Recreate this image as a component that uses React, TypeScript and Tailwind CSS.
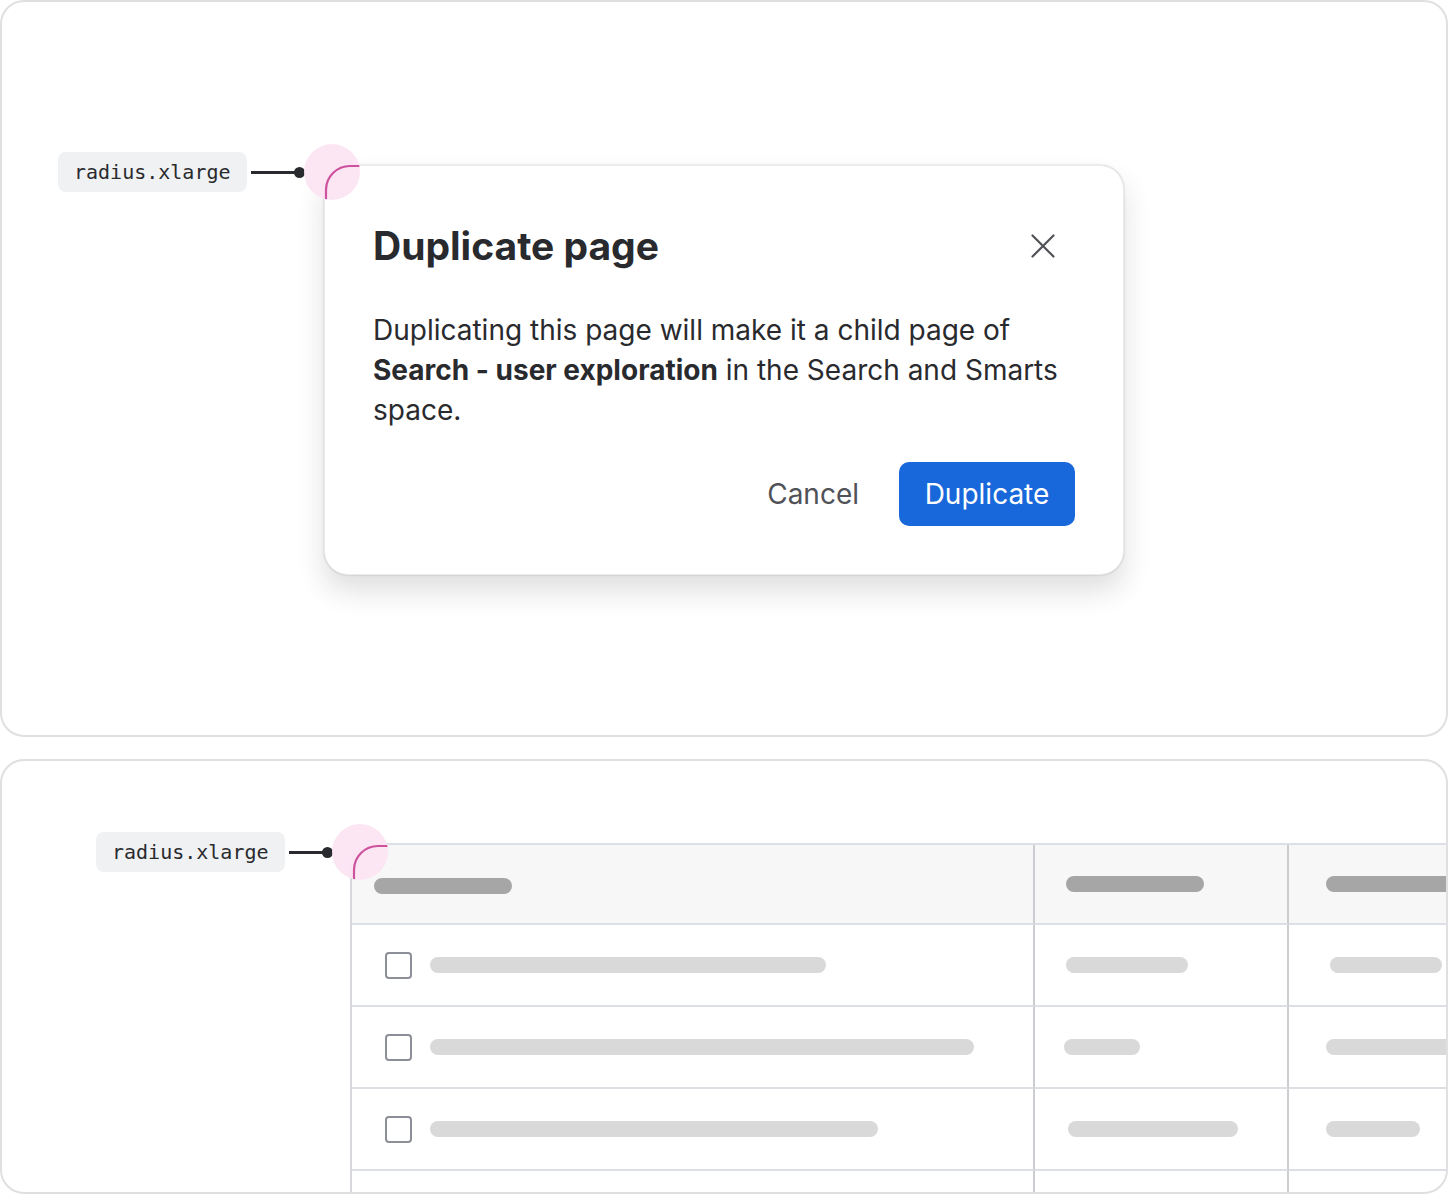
import { useId } from "react";

const mono = { fontFamily: '"DejaVu Sans Mono", "Liberation Mono", monospace' };

// chip + leader line + pink corner marker
function RadiusTag({ className, lineW }: { className: string; lineW: string }) {
  const clip = useId();
  return (
    <div className={`absolute flex items-center ${className}`}>
      <span
        className="flex h-10 items-center rounded-lg bg-[#f0f1f2] px-4 text-[20px] text-[#292a2e]"
        style={mono}
      >
        radius.xlarge
      </span>
      <span className={`ml-1 h-[3px] bg-[#292a2e] ${lineW}`} />
      <span className="-ml-[3px] h-[11px] w-[11px] rounded-full bg-[#292a2e]" />
      <svg width="56" height="56" viewBox="0 0 56 56" className="-ml-px">
        <defs>
          <clipPath id={clip}>
            <circle cx="28" cy="28" r="28" />
          </clipPath>
        </defs>
        <circle cx="28" cy="28" r="28" fill="#fce5f3" fillOpacity="0.95" />
        <path
          d="M22 60 V46 A24 24 0 0 1 46 22 H60"
          fill="none"
          stroke="#cd519d"
          strokeWidth="2.2"
          clipPath={`url(#${clip})`}
        />
      </svg>
    </div>
  );
}

function Bar({ w, dark, className = "" }: { w: string; dark?: boolean; className?: string }) {
  return (
    <span
      className={`block h-4 shrink-0 rounded-full ${dark ? "bg-[#a6a6a6]" : "bg-[#d9d9d9]"} ${w} ${className}`}
    />
  );
}

function Checkbox() {
  return <span className="block h-[27px] w-[27px] shrink-0 rounded-[4px] border-2 border-[#8c8f97]" />;
}

const cell = "flex items-center border-b-2 border-r-2 border-b-[#dcdfe4] border-r-[#cbcdd1]";

const rows = [
  { a: "w-[396px]", b: "w-[122px]", bx: "ml-[31px]", c: "w-[112px]", cx: "ml-[41px]" },
  { a: "w-[544px]", b: "w-[76px]", bx: "ml-[29px]", c: "w-[160px]", cx: "ml-[37px]" },
  { a: "w-[448px]", b: "w-[170px]", bx: "ml-[33px]", c: "w-[94px]", cx: "ml-[37px]" },
];

function Dialog() {
  return (
    <div className="w-[800px] rounded-[24px] border border-[#ebebeb] bg-white px-12 pb-12 pt-12 shadow-[0_16px_28px_rgba(30,31,33,0.14),0_0_2px_rgba(30,31,33,0.25)]">
      <header className="flex h-16 items-center justify-between">
        <h2 className="text-[39px] font-bold leading-10 text-[#292a2e]">Duplicate page</h2>
        <button type="button" className="flex h-16 w-16 items-center justify-center text-[#505258]">
          <svg width="24" height="24" viewBox="0 0 24 24" fill="none" stroke="currentColor" strokeWidth="2.2" strokeLinecap="round">
            <path d="M1.5 1.5 L22.5 22.5 M22.5 1.5 L1.5 22.5" />
          </svg>
        </button>
      </header>
      <p className="mt-8 text-[28px] leading-10 text-[#292a2e]">
        Duplicating this page will make it a child page of <strong className="font-bold">Search - user exploration</strong> in
        the Search and Smarts space.
      </p>
      <footer className="mt-8 flex justify-end gap-4">
        <button type="button" className="h-16 rounded-[10px] px-6 text-[28px] text-[#505258]">
          Cancel
        </button>
        <button
          type="button"
          className="flex h-16 w-[176px] items-center justify-center rounded-[10px] bg-[#1868db] text-[28px] text-white"
        >
          Duplicate
        </button>
      </footer>
    </div>
  );
}

export default function App() {
  return (
    <main
      className="flex h-[1194px] w-[1448px] flex-col gap-[22px] overflow-hidden bg-white"
      style={{ fontFamily: 'Inter, "Noto Sans", sans-serif' }}
    >
      <section className="relative h-[737px] shrink-0 rounded-[24px] border-2 border-[#e0e0e0] pl-[322px] pt-[163px]">
        <Dialog />
        <RadiusTag className="left-[56px] top-[142px]" lineW="w-[46px]" />
      </section>

      <section className="relative flex-1 overflow-hidden rounded-[24px] border-2 border-[#e0e0e0] pl-[348px] pt-[82px]">
        <div className="w-[1200px] overflow-hidden rounded-tl-[24px] border-l-2 border-t-2 border-l-[#d6d8dc] border-t-[#dcdfe4]">
          <div className="grid h-[80px] grid-cols-[683px_254px_263px] bg-[#f7f7f7]">
            <div className={cell}>
              <Bar dark w="w-[138px]" className="ml-[22px] mt-[3px]" />
            </div>
            <div className={cell}>
              <Bar dark w="w-[138px]" className="ml-[31px]" />
            </div>
            <div className={cell}>
              <Bar dark w="w-[200px]" className="ml-[37px]" />
            </div>
          </div>
          {rows.map((r, i) => (
            <div key={i} className="grid h-[82px] grid-cols-[683px_254px_263px]">
              <div className={`${cell} gap-[18px] pl-[33px]`}>
                <Checkbox />
                <Bar w={r.a} />
              </div>
              <div className={cell}>
                <Bar w={r.b} className={r.bx} />
              </div>
              <div className={cell}>
                <Bar w={r.c} className={r.cx} />
              </div>
            </div>
          ))}
          <div className="grid h-[82px] grid-cols-[683px_254px_263px]">
            <div className={cell} />
            <div className={cell} />
            <div className={cell} />
          </div>
        </div>
        <RadiusTag className="left-[94px] top-[63px]" lineW="w-[36px]" />
      </section>
    </main>
  );
}
